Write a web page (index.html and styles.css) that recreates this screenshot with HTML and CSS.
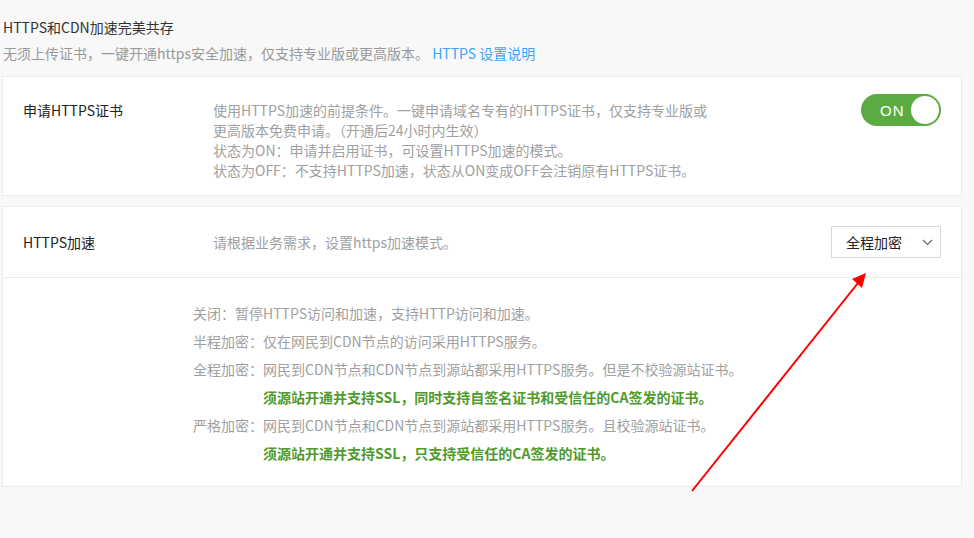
FILE: index.html
```html
<!DOCTYPE html>
<html lang="zh-CN">
<head>
    <meta charset="UTF-8">
    <title>HTTPS设置</title>
    <link rel="stylesheet" href="styles.css">
</head>
<body>

    <div class="page">
        <h1 class="page-title">HTTPS和CDN加速完美共存</h1>
        <p class="page-desc">无须上传证书，一键开通https安全加速，仅支持专业版或更高版本。 <a href="#" class="help-link">HTTPS 设置说明</a></p>

        <!-- 申请证书 -->
        <div class="card">
            <div class="row row-cert">
                <div class="row-label">申请HTTPS证书</div>
                <div class="row-desc">
                    使用HTTPS加速的前提条件。一键申请域名专有的HTTPS证书，仅支持专业版或<br>
                    更高版本免费申请。（开通后24小时内生效）<br>
                    状态为ON：申请并启用证书，可设置HTTPS加速的模式。<br>
                    状态为OFF：不支持HTTPS加速，状态从ON变成OFF会注销原有HTTPS证书。
                </div>
                <div class="row-action">
                    <span class="switch on">ON<i class="switch-knob"></i></span>
                </div>
            </div>
        </div>

        <!-- 加速模式 -->
        <div class="card">
            <div class="row row-head">
                <div class="row-label">HTTPS加速</div>
                <div class="row-desc">请根据业务需求，设置https加速模式。</div>
                <div class="row-action">
                    <div class="select">
                        <span>全程加密</span>
                        <svg width="11" height="7" viewBox="0 0 11 7"><path d="M1 1 L5.5 5.5 L10 1" fill="none" stroke="#666" stroke-width="1.2"/></svg>
                    </div>
                </div>
            </div>
            <div class="mode-list">
                <p>关闭：暂停HTTPS访问和加速，支持HTTP访问和加速。</p>
                <p>半程加密：仅在网民到CDN节点的访问采用HTTPS服务。</p>
                <p>全程加密：网民到CDN节点和CDN节点到源站都采用HTTPS服务。但是不校验源站证书。</p>
                <p class="mode-note">须源站开通并支持SSL，同时支持自签名证书和受信任的CA签发的证书。</p>
                <p>严格加密：网民到CDN节点和CDN节点到源站都采用HTTPS服务。且校验源站证书。</p>
                <p class="mode-note">须源站开通并支持SSL，只支持受信任的CA签发的证书。</p>
            </div>
        </div>
    </div>

    <!-- 标注箭头 -->
    <svg class="mark-arrow" width="974" height="538" viewBox="0 0 974 538">
        <line x1="692" y1="491" x2="858" y2="283" stroke="#f00" stroke-width="2"/>
        <polygon points="866,273 852,279 862,288" fill="#f00"/>
    </svg>

</body>
</html>
```

FILE: styles.css
```css
* {
    margin: 0;
    padding: 0;
    box-sizing: border-box;
}

body {
    font-family: "Noto Sans CJK SC", "Liberation Sans", sans-serif;
    font-size: 14px;
    background: #f8f8f8;
    color: #333;
    position: relative;
    width: 974px;
    height: 538px;
    overflow: hidden;
}

.page {
    width: 962px;
    padding: 17px 0 0 2px;
}

.page-title {
    font-size: 14px;
    font-weight: normal;
    line-height: 20px;
    color: #333;
    padding-left: 1px;
}

.page-desc {
    margin-top: 6px;
    line-height: 20px;
    color: #999;
    padding-left: 1px;
}

.help-link {
    color: #3ea3f5;
    text-decoration: none;
}

.card {
    background: white;
    border: 1px solid #ebebeb;
    margin-top: 13px;
}

.card + .card {
    margin-top: 10px;
}

.row {
    display: flex;
    padding: 0 20px;
}

.row-label {
    width: 190px;
    flex-shrink: 0;
    color: #222;
    line-height: 20px;
}

.row-desc {
    flex: 1;
    color: #a0a0a0;
    line-height: 20px;
}

.row-cert {
    padding-top: 23px;
    padding-bottom: 15px;
    align-items: flex-start;
}

.row-cert .row-action {
    margin-top: -6px;
}

.row-head {
    height: 71px;
    align-items: center;
    border-bottom: 1px solid #ebebeb;
}

/* 开关 */
.switch {
    position: relative;
    display: flex;
    align-items: center;
    width: 80px;
    height: 32px;
    border-radius: 16px;
    background: #5cab42;
    color: white;
    font-family: "Liberation Sans", sans-serif;
    font-size: 15px;
    letter-spacing: 1px;
    padding-left: 19px;
}

.switch-knob {
    position: absolute;
    right: 2px;
    top: 2px;
    width: 28px;
    height: 28px;
    border-radius: 50%;
    background: white;
}

/* 下拉 */
.select {
    width: 110px;
    height: 32px;
    border: 1px solid #d6d6d6;
    display: flex;
    align-items: center;
    justify-content: space-between;
    padding: 0 7px 0 14px;
    color: #222;
    background: white;
}

.mode-list {
    padding: 21px 0 19px 190px;
}

.mode-list p {
    line-height: 28px;
    color: #a0a0a0;
}

.mode-list .mode-note {
    padding-left: 70px;
    color: #4e9a2b;
    font-weight: bold;
}

.mark-arrow {
    position: absolute;
    left: 0;
    top: 0;
    pointer-events: none;
}
```
